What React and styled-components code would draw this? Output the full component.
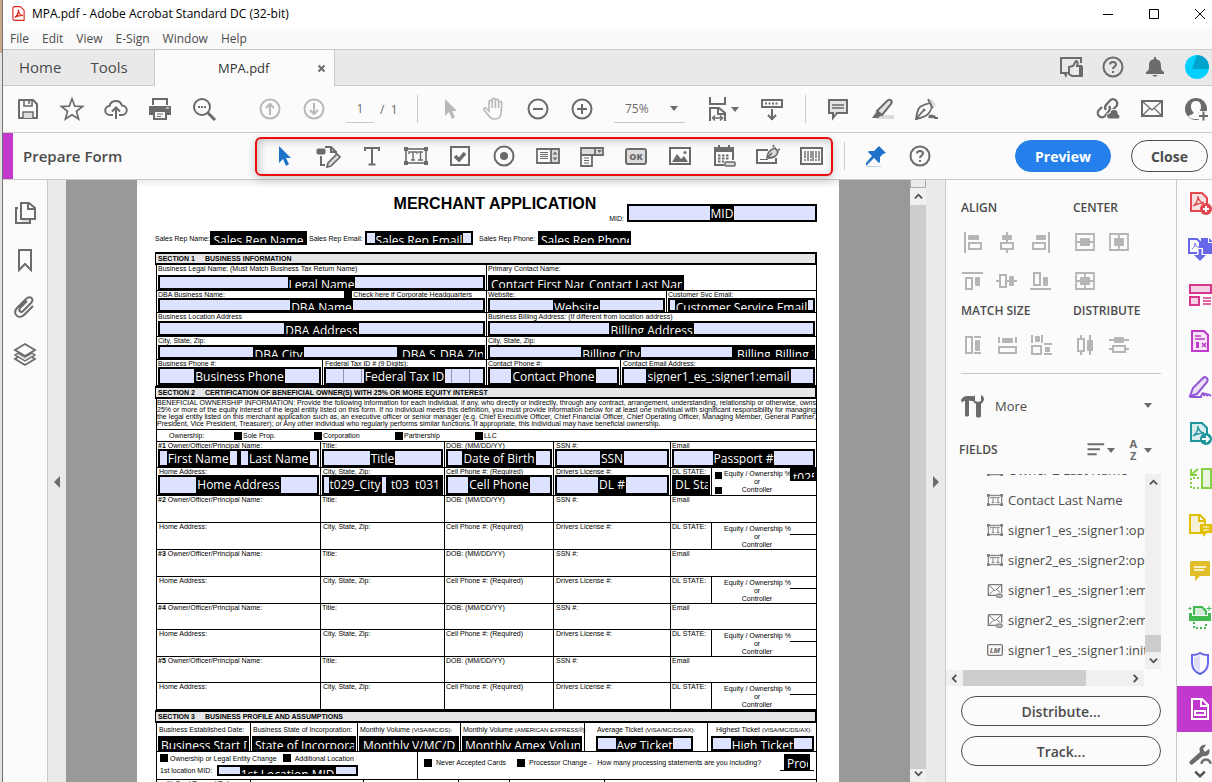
import React from 'react';
import styled, { createGlobalStyle, css } from 'styled-components';

const GlobalStyle = createGlobalStyle`
  * {
    box-sizing: border-box;
  }
  body {
    margin: 0;
    background: #fbfbfb;
    color: #4b4b4b;
    font-family: "Open Sans", "Noto Sans", sans-serif;
    font-size: 12px;
    overflow: hidden;
  }
  button, input, select {
    font-family: inherit;
    color: inherit;
  }
`;

/* ---------- icons ---------- */

const line = { fill: 'none', stroke: 'currentColor', strokeWidth: 2 };
const thin = { fill: 'none', stroke: 'currentColor', strokeWidth: 1 };

const pdfSwirl = <path d="M5 15c3-2 5-6 5-10 0 4 3 7 6 7-4 0-8 1-11 3z" fill="none" stroke="currentColor" strokeWidth="1.3" />;

const textBox = (
  <>
    <rect x="2" y="5" width="20" height="14" {...line} strokeWidth="1.6" />
    <path d="M0 3h4v4H0zM20 3h4v4h-4zM0 17h4v4H0zM20 17h4v4h-4z" fill="currentColor" />
    <path d="M5 10V8h8v2M9 8v8M7 16h4M14 8h5M16.5 8v8M14 16h5" {...line} strokeWidth="1.4" />
  </>
);

const icons = {
  save: (
    <>
      <path d="M3 3h14l4 4v14H3z" {...line} strokeLinejoin="round" />
      <path d="M8 3v6h8V3M13 4v3" {...line} strokeWidth="1.6" />
      <path d="M7 21v-6h10v6" fill="#ddd" stroke="currentColor" strokeWidth="1.5" />
    </>
  ),
  star: <path d="M12 1.800l2.800 7.400 7.800.3-6.100 4.900 2.100 7.600-6.600-4.300L5.400 22l2.100-7.600L1.400 9.500l7.800-.3z" {...line} strokeWidth="1.7" />,
  cloud: (
    <>
      <path d="M9 18H6a4.500 4.500 0 0 1-.5-9 6.500 6.500 0 0 1 12.500-.5A4.500 4.500 0 0 1 18 18h-3" {...line} />
      <path d="M12 22V11M8 14.500l4-4 4 4" {...line} />
    </>
  ),
  print: (
    <>
      <path d="M5 8V2h14v6" {...line} />
      <path d="M1 9h22v9h-4v-3H5v3H1z" fill="currentColor" />
      <path d="M6 14h12v8H6z" fill="#fbfbfb" stroke="currentColor" strokeWidth="2" />
      <path d="M9 17h6M9 19.500h4" {...thin} />
      <path d="M18 11h3" stroke="#fff" />
    </>
  ),
  search: (
    <>
      <circle cx="10" cy="10" r="8" {...line} />
      <path d="M16 16l7 7" {...line} strokeWidth="3" />
      <path d="M6 10h2M9 10h2M12 10h2" {...line} />
    </>
  ),
  up: (
    <>
      <circle cx="12" cy="12" r="9.500" {...line} />
      <path d="M12 18V7M8 11l4-4 4 4" {...line} />
    </>
  ),
  down: (
    <>
      <circle cx="12" cy="12" r="9.500" {...line} />
      <path d="M12 6v11M8 13l4 4 4-4" {...line} />
    </>
  ),
  cursor: <path d="M7 2l12 12h-5l3 6-3 2-3-7-4 4z" fill="currentColor" />,
  hand: (
    <path d="M7 14V5a1.600 1.600 0 0 1 3.200 0V3a1.600 1.600 0 0 1 3.200 0v1a1.600 1.600 0 0 1 3.200 0v2a1.600 1.600 0 0 1 3.200 0l-.6 10c-.4 4-2.500 6-6.500 6-3.500 0-5-1.500-6.500-4L2 13c-1-2 1-3 2.500-1.500zM10.200 5v6M13.400 4v7M16.600 5v6" {...line} strokeWidth="1.6" />
  ),
  minus: (
    <>
      <circle cx="12" cy="12" r="9.500" {...line} />
      <path d="M7 12h10" {...line} />
    </>
  ),
  plus: (
    <>
      <circle cx="12" cy="12" r="9.500" {...line} />
      <path d="M7 12h10M12 7v10" {...line} />
    </>
  ),
  fit: (
    <>
      <path d="M5 0v7h15V0M5 24V11h9l6 5v8M13 11v6h7" {...line} />
      <path d="M8 21h9M10 18.500L7.500 21l2.500 2.500M15 18.500l2.500 2.500-2.500 2.500" {...line} strokeWidth="1.5" />
    </>
  ),
  keys: (
    <>
      <path d="M2 3h20v7H2z" {...line} />
      <path d="M5 6.500h14" {...line} strokeDasharray="2 1.5" />
      <path d="M12 12v11M8 18l4 4 4-4" {...line} />
    </>
  ),
  comment: (
    <>
      <path d="M3 3h18v13H11l-4 5v-5H3z" fill="#e3e3e3" stroke="currentColor" strokeWidth="2" />
      <path d="M6 8h12M6 11h12" {...thin} strokeWidth="1.3" />
    </>
  ),
  marker: (
    <>
      <path d="M9 18h15v4H6z" fill="#dcdcdc" />
      <path d="M7 14L17 4c3-3 6 0 4 3L12 18z" fill="#e3e3e3" stroke="currentColor" strokeWidth="2" />
      <path d="M7 14l5 4-4 3H2z" fill="currentColor" />
    </>
  ),
  pen: (
    <>
      <path d="M14 4l4-2 4 7-3 1z" fill="#dcdcdc" />
      <path d="M14 2l2 4c2 2 2 6-1 10-3 4-8 5-13 6 1-5 1-9 4-12 3-2 6-3 10-4M2 22l7-8M16 7l3 4" {...line} strokeWidth="1.8" />
      <circle cx="10" cy="13" r="1.500" fill="currentColor" />
      <path d="M15 21c1-4 2-3 2 0 1-4 2-3 2 0 1-3 2-2 2 0h3" {...line} strokeWidth="1.8" />
    </>
  ),
  link: (
    <>
      <path d="M10 13a4 4 0 0 1 0-5l4-4.500a4 4 0 0 1 6 6l-3 3M13 9a4 4 0 0 1 0 5l-4 5a4 4 0 0 1-6-6l3-3" {...line} strokeWidth="2.3" />
      <path d="M13 22a3 3 0 0 1 1-6 4 4 0 0 1 8 1c3 1 2 5 0 5z" fill="currentColor" stroke="#fbfbfb" />
    </>
  ),
  mail: (
    <>
      <path d="M2 4h20v15H2z" {...line} />
      <path d="M3 5l9 8 9-8M3 18l7-7M21 18l-7-7" {...thin} strokeWidth="1.2" />
    </>
  ),
  person: (
    <>
      <circle cx="12" cy="12" r="11" fill="currentColor" />
      <path d="M12 4c-4 0-5 3-5 6 0 2 1 4 2.500 5.500 0 2-3 2-5.500 4A10 10 0 0 0 12 22c2 0 3 0 5-1v-4c-2-.5-2.500-1-2.500-1.500C16 14 17 12 17 10c0-3-1-6-5-6z" fill="#fbfbfb" />
      <path d="M15 14h9v9h-9z" fill="#fbfbfb" />
      <path d="M19.500 14.500v9M15 19h9" {...line} />
    </>
  ),
  thumbs: (
    <>
      <path d="M7 18H2V3h20v5" {...line} />
      <path d="M4 17h5l-2 6z" fill="currentColor" />
      <path d="M10 12l4-1 3-5c2 0 2 2 1 5h4v10H13l-3-2z" fill="#e9e9e9" stroke="currentColor" strokeWidth="2" />
      <path d="M20 11h4v11h-4z" fill="currentColor" />
    </>
  ),
  help: (
    <>
      <circle cx="12" cy="12" r="9.500" {...line} />
      <path d="M9 9.500c0-3.500 6-3.500 6 0 0 2-3 2-3 4.500M12 16v2" {...line} />
    </>
  ),
  bell: <path d="M11 2h2v2c4 1 5 3 5 7 0 4 1 5 3 6v2H3v-2c2-1 3-2 3-6 0-4 1-6 5-7zM9 20h6l-3 2z" fill="currentColor" />,
  pin: (
    <>
      <path d="M3 22h14v1H3z" fill="#b8d4f3" />
      <path d="M15 2l7 7-3 1-3 3v5l-1 1-5-5-8 8v-3l6-7-4-4 1-1h5l3-3z" fill="currentColor" />
    </>
  ),
  edit: (
    <>
      <path d="M9 3h6l5 5v2M15 3v5h6M5 12v9h4" {...line} />
      <rect x="1" y="5" width="8" height="5" rx="1" fill="currentColor" stroke="currentColor" />
      <path d="M11 23l1-4 9-9 3 3-9 9z" fill="#ddd" stroke="currentColor" strokeWidth="1.7" />
    </>
  ),
  text: <path d="M5 7V4h14v3M12 4v16M8.500 20.500h7" {...line} />,
  textBox,
  check: (
    <>
      <rect x="3" y="3" width="18" height="18" {...line} />
      <path d="M7 12l4 4 6-7" {...line} strokeWidth="3.5" />
    </>
  ),
  radio: (
    <>
      <circle cx="12" cy="12" r="9.500" {...line} />
      <circle cx="12" cy="12" r="4" fill="currentColor" />
    </>
  ),
  listBox: (
    <>
      <path d="M15 5h8v14h-8z" fill="#ddd" />
      <path d="M1 5h22v14H1zM15 5v14" {...line} strokeWidth="1.8" />
      <path d="M4 8.500h8M4 10.500h8M4 12.500h8M4 14.500h8" {...thin} />
      <path d="M16.500 10.500h5L19 7.500zM16.500 13.500h5L19 16.500z" fill="currentColor" />
    </>
  ),
  dropdown: (
    <>
      <path d="M1 4h22v7H1z" fill="#ddd" stroke="currentColor" strokeWidth="1.8" />
      <path d="M1 11h11v11H1zM15 4v7" {...line} strokeWidth="1.8" />
      <path d="M17 6h5l-2.500 3z" fill="currentColor" />
      <path d="M4 14h5M4 16.500h5M4 19h5" {...thin} />
    </>
  ),
  ok: (
    <>
      <rect x="2" y="5" width="20" height="15" rx="2" fill="#ddd" stroke="currentColor" strokeWidth="2" />
      <text x="12" y="16" fontSize="9" fontWeight="800" textAnchor="middle" fill="currentColor">OK</text>
    </>
  ),
  image: (
    <>
      <rect x="2" y="4" width="20" height="16" {...line} />
      <path d="M4 18l5-8 4 5 3-3 4 6z" fill="currentColor" />
      <circle cx="17" cy="8.500" r="1.500" fill="currentColor" />
    </>
  ),
  date: (
    <>
      <path d="M12 21H3V4h18v12" {...line} />
      <path d="M3 4h18v4H3zM6 1h2v4H6zM16 1h2v4h-2z" fill="currentColor" />
      <path d="M6 11.500h12M6 14.500h12M6 17.500h6" {...line} strokeDasharray="2.5 1.5" />
      <rect x="13" y="18" width="10" height="4" rx="1" fill="#ddd" stroke="currentColor" strokeWidth="1.6" />
    </>
  ),
  sign: (
    <>
      <path d="M12 6H1v13h19v-5" {...line} />
      <path d="M4 15.500h8" {...thin} />
      <path d="M11 14c0-5 2-8 8-10l3 4c-2 5-5 6-11 6zM17 3l1-2M11 14l5-5M22 6l2-1" fill="#ddd" stroke="currentColor" strokeWidth="1.7" />
    </>
  ),
  barcode: (
    <>
      <rect x="1" y="4" width="21" height="16" {...line} />
      <path d="M5 7v7M8 7v10M11 7v7M13 7v10M16 7v7M19 7v10" {...line} strokeWidth="1.4" />
      <path d="M5 15v2M11 15v2M16 15v2" {...line} strokeWidth="1.4" />
    </>
  ),
  pages: (
    <>
      <path d="M8 2h8l6 5v11H8zM15 2v6h6" {...line} />
      <path d="M5 7H3v15h14v-4" {...line} />
      <path d="M9 20h7" stroke="#ddd" strokeWidth="2" />
    </>
  ),
  bookmark: <path d="M6 2h12v20l-6-6-6 6z" {...line} />,
  clip: <path d="M14 6l-7 7c-2 3 1 5 3 3l8-8c4-4-1-8-5-4l-9 9c-5 6 2 12 7 7l9-9" {...line} />,
  layers: (
    <>
      <path d="M12 2l10 6-10 6L2 8z" {...line} strokeWidth="1.8" />
      <path d="M5 11l-3 2 10 6 10-6-3-2-7 4z" fill="#ddd" stroke="currentColor" strokeWidth="1.4" />
      <path d="M5 15l-3 2 10 6 10-6-3-2" {...line} strokeWidth="1.8" />
    </>
  ),
  alignLeft: (
    <>
      <path d="M4 2v21" {...line} />
      <rect x="7" y="5" width="11" height="5" rx="1" fill="currentColor" />
      <rect x="8" y="13" width="12" height="6" {...line} />
    </>
  ),
  alignMid: (
    <>
      <path d="M12 2v10M12 19v4" {...line} />
      <rect x="7" y="5" width="10" height="5" rx="1" fill="currentColor" />
      <rect x="6" y="13" width="12" height="6" {...line} />
    </>
  ),
  alignRight: (
    <>
      <path d="M20 2v21" {...line} />
      <rect x="7" y="5" width="10" height="5" rx="1" fill="currentColor" />
      <rect x="4" y="13" width="12" height="6" {...line} />
    </>
  ),
  alignTop: (
    <>
      <path d="M1 4h21" {...line} />
      <rect x="5" y="9" width="6" height="11" {...line} />
      <rect x="14" y="8" width="5" height="9" rx="1" fill="currentColor" />
    </>
  ),
  alignCenter: (
    <>
      <path d="M1 12h4M11 12h11" {...line} />
      <rect x="5" y="6" width="6" height="12" {...line} />
      <rect x="14" y="7" width="5" height="10" rx="1" fill="currentColor" />
    </>
  ),
  alignBottom: (
    <>
      <path d="M1 20h21" {...line} />
      <rect x="5" y="4" width="6" height="12" {...line} />
      <rect x="14" y="8" width="5" height="9" rx="1" fill="currentColor" />
    </>
  ),
  centerV: (
    <>
      <path d="M3 4h18v16H3zM3 12h18" {...line} strokeWidth="1.8" />
      <rect x="7" y="8" width="10" height="8" rx="1" fill="currentColor" />
    </>
  ),
  centerH: (
    <>
      <path d="M3 4h18v16H3zM12 4v16" {...line} strokeWidth="1.8" />
      <rect x="7" y="8" width="10" height="8" rx="1" fill="currentColor" />
    </>
  ),
  centerBoth: (
    <>
      <path d="M3 4h18v16H3zM12 4v16M3 12h18" {...line} strokeWidth="1.8" />
      <rect x="7" y="8" width="10" height="8" rx="1" fill="currentColor" />
    </>
  ),
  sameHeight: (
    <>
      <rect x="5" y="4" width="6" height="16" {...line} />
      <path d="M13 4h7M13 20h7" {...line} />
      <rect x="14" y="7" width="5" height="11" rx="1" fill="currentColor" />
    </>
  ),
  sameWidth: (
    <>
      <path d="M4 4v6M21 4v6" {...line} />
      <rect x="7" y="5" width="11" height="5" rx="1" fill="currentColor" />
      <rect x="4" y="14" width="17" height="6" {...line} />
    </>
  ),
  sameBoth: (
    <>
      <path d="M3 2v8M13 2v8M15 11h8M15 21h8" {...line} />
      <rect x="6" y="3" width="5" height="6" rx="1" fill="currentColor" />
      <rect x="3" y="13" width="9" height="8" {...line} />
      <rect x="16" y="14" width="5" height="5" fill="currentColor" />
    </>
  ),
  spreadH: (
    <>
      <path d="M8 2v4M8 18v4M17 2v20" {...line} />
      <rect x="5" y="6" width="6" height="12" {...line} />
      <rect x="14" y="7" width="6" height="11" rx="1" fill="currentColor" />
    </>
  ),
  spreadV: (
    <>
      <path d="M2 7h20M2 16h4M18 16h4" {...line} />
      <rect x="7" y="4" width="10" height="6" rx="1" fill="currentColor" />
      <rect x="6" y="13" width="12" height="6" {...line} />
    </>
  ),
  tools: (
    <path d="M0 6c2-4 5-4 8-4h4v5H9L8 6v15c0 2-4 2-4 0V7C3 7 2 7 1 9zM14 1v6l3 1 3-1V1c4 2 4 6 0 9v12c0 2-5 2-5 0V10c-5-3-4-7-1-9z" fill="currentColor" />
  ),
  sort: <path d="M3 5h20M3 11h15M3 17h11" {...line} strokeWidth="2.4" />,
  email: (
    <>
      <path d="M2 4h20v12M2 4v16h12" {...line} />
      <path d="M3 5l9 8 9-8M3 19l7-7M20 16l-6-5" {...line} strokeWidth="1.5" />
      <rect x="14" y="18" width="9" height="5" rx="2" fill="#bbb" stroke="currentColor" strokeWidth="1.5" />
    </>
  ),
  initials: (
    <>
      <rect x="1" y="4" width="22" height="16" rx="2" {...line} />
      <text x="12" y="16" fontSize="11" fontStyle="italic" fontWeight="800" textAnchor="middle" fill="currentColor">LM</text>
    </>
  ),
  acrobat: (
    <>
      <path d="M5 1h10l6 6v16H5L3 21V3z" {...line} strokeWidth="1.8" />
      <path d="M6 18c4-2 6-8 6-12 0 5 3 9 7 9-5 0-9 1-13 3z" {...line} />
    </>
  ),
  createPdf: (
    <>
      <path d="M3 2h11l5 5v13H3z" fill="currentColor" fillOpacity=".15" stroke="currentColor" strokeWidth="2" />
      {pdfSwirl}
      <circle cx="18" cy="18" r="6" fill="currentColor" />
      <path d="M15 18h6M18 15v6" stroke="#fff" strokeWidth="2" />
    </>
  ),
  combine: (
    <>
      <path d="M13 1h7v5h5v11H13z" fill="currentColor" />
      <path d="M21 1l4 4h-4z" fill="currentColor" />
      <path d="M1 2h8l3 3v11H1z" fill="#fbfbfb" stroke="currentColor" strokeWidth="2" />
      <path d="M4 12c3-2 3-4 3-6 0 3 2 4 4 4" {...thin} />
      <path d="M12 11v8" stroke="#fbfbfb" strokeWidth="6" />
      <path d="M12 12v7" stroke="currentColor" strokeWidth="3" />
      <path d="M6 18h12l-6 6z" fill="currentColor" />
    </>
  ),
  organize: (
    <>
      <path d="M2 2h21v8H2zM2 14h9v8H2z" fill="currentColor" fillOpacity=".2" stroke="currentColor" strokeWidth="2" />
      <path d="M15 15h8M15 18h8M15 21h8" {...thin} strokeWidth="1.4" />
    </>
  ),
  formDoc: (
    <>
      <path d="M4 2h12l4 4v16H4z" fill="currentColor" fillOpacity=".1" stroke="currentColor" strokeWidth="2" />
      <path d="M7 7h6M7 10h10" {...line} strokeWidth="1.5" />
      <path d="M8 13h3v6H8z" fill="currentColor" />
      <path d="M14 14l4 4M18 14l-4 4" {...line} strokeWidth="1.5" />
    </>
  ),
  fillSign: (
    <>
      <path d="M2 21l3-8L15 3c2-2 6 0 4 4L9 19z" fill="currentColor" fillOpacity=".15" stroke="currentColor" strokeWidth="2" />
      <path d="M2 22h11c1-5 3-5 3-1 1-3 3-3 3 0 1-2 2-2 4 0" {...line} />
    </>
  ),
  exportPdf: (
    <>
      <path d="M3 2h11l5 5v13H3z" fill="currentColor" fillOpacity=".15" stroke="currentColor" strokeWidth="2" />
      {pdfSwirl}
      <circle cx="18" cy="18" r="6" fill="currentColor" />
      <path d="M14 18h7M18 15l3 3-3 3" fill="none" stroke="#fff" strokeWidth="1.8" />
    </>
  ),
  compress: (
    <>
      <path d="M14 2h9v19h-9z" fill="currentColor" fillOpacity=".15" stroke="currentColor" strokeWidth="2" />
      <path d="M11 11H3v10h9" {...line} strokeDasharray="2 2" />
      <path d="M10 2L4 7M3 2v6h6" {...line} />
    </>
  ),
  pageNote: (
    <>
      <path d="M2 2h10l5 5v13H2zM11 2v6h6" fill="currentColor" fillOpacity=".15" stroke="currentColor" strokeWidth="2" />
      <path d="M12 11h12v9h-5l-4 4v-4h-3z" fill="currentColor" />
      <path d="M15 14h6M15 17h6" stroke="#fff" />
    </>
  ),
  note: (
    <>
      <path d="M3 2h18a1 1 0 0 1 1 1v14H12l-5 5v-5H2V3z" fill="currentColor" />
      <path d="M6 8h12M6 11h10" stroke="#fff" strokeWidth="1.4" />
    </>
  ),
  scan: (
    <>
      <path d="M6 10V2h8l4 4v4" fill="currentColor" fillOpacity=".2" stroke="currentColor" strokeWidth="2" />
      <path d="M1 8h3v3h16V8h3v8H1z" fill="currentColor" />
      <path d="M6 17v6h12v-6" {...line} strokeDasharray="2 2" />
      <path d="M21 1v5M18.500 3.500h5M2 2v3M.500 3.500h3" {...thin} />
    </>
  ),
  shield: (
    <>
      <path d="M12 2c3 2 6 2 8 2v8c0 5-3 9-8 11-5-2-8-6-8-11V4c2 0 5 0 8-2z" {...line} />
      <path d="M12 4v17c-4-2-6-5-6-9V6c2 0 4-1 6-2z" fill="currentColor" fillOpacity=".2" />
    </>
  ),
  prepare: (
    <>
      <path d="M4 2h10l6 6v14H4zM13 2v7h7" {...line} />
      <rect x="7" y="14" width="10" height="4" {...line} />
    </>
  ),
  wrench: (
    <>
      <path d="M2 18L12 9c-2-4 2-8 6-7l-3 4 2 3 4-3c2 5-2 8-6 7L5 21c-2 2-5-1-3-3z" fill="currentColor" />
      <path d="M12 21a6 6 0 0 1 12 0h-3a3 3 0 0 0-6 0z" fill="currentColor" stroke="#fbfbfb" strokeWidth=".5" />
    </>
  ),
};

const Svg = styled.svg`
  display: block;
  flex: none;
  overflow: visible;
  color: ${(p) => p.$color || 'inherit'};
`;

function Icon({ name, size = 24, color }) {
  return (
    <Svg viewBox="0 0 24 24" width={size} height={size} $color={color} aria-hidden="true">
      {icons[name]}
    </Svg>
  );
}

/* ---------- window chrome ---------- */

const Screen = styled.div`
  display: flex;
  height: 100vh;
`;

const Edge = styled.div`
  flex: none;
  width: 3px;
  border-right: 1px solid #737373;
  background: linear-gradient(#c9a98a 0 53px, #e2e2e2 53px);
`;

const Main = styled.div`
  flex: 1;
  min-width: 0;
  display: flex;
  flex-direction: column;
`;

const TitleBar = styled.header`
  flex: none;
  height: 29px;
  display: flex;
  align-items: center;
  gap: 6px;
  padding: 0 6px 2px 8px;
  background: #fff;
  color: #000;
  h1 {
    flex: 1;
    margin: 0;
    font-size: 12px;
    font-weight: 400;
  }
`;

const WindowButtons = styled.div`
  display: flex;
  gap: 34px;
`;

const Plain = styled.button`
  display: flex;
  align-items: center;
  justify-content: center;
  border: 0;
  padding: 0;
  background: none;
`;

const MenuBar = styled.nav`
  flex: none;
  height: 21px;
  display: flex;
  align-items: center;
  gap: 13px;
  padding: 0 0 2px 7px;
  background: #fafafa;
  border-bottom: 1px solid #c9c9c9;
  a {
    color: inherit;
    text-decoration: none;
  }
`;

const TabBar = styled.div`
  flex: none;
  height: 36px;
  display: flex;
  background: #e9e9e9;
  border-bottom: 1px solid #c9c9c9;
`;

const TabLinks = styled.div`
  width: 152px;
  display: flex;
  align-items: center;
  gap: 29px;
  padding: 0 0 2px 16px;
  border-right: 1px solid #c9c9c9;
  button {
    font-size: 15px;
  }
`;

const DocTab = styled.div`
  width: 180px;
  height: 36px;
  display: flex;
  align-items: center;
  justify-content: space-between;
  padding: 0 8px 0 63px;
  background: #fbfbfb;
  border-right: 1px solid #c9c9c9;
  font-size: 13px;
  color: #333;
`;

const TabTools = styled.div`
  flex: 1;
  display: flex;
  align-items: center;
  justify-content: flex-end;
  gap: 18px;
  padding: 0 3px 2px 0;
  color: #6b6b6b;
`;

const ToolBar = styled.div`
  flex: none;
  height: 47px;
  display: flex;
  align-items: center;
  padding-left: 3px;
  border-bottom: 1px solid #c9c9c9;
  color: #6b6b6b;
`;

const Group = styled.div`
  display: flex;
  align-items: center;
  margin-left: ${(p) => p.$left || 0}px;
`;

const Tool = styled(Plain)`
  width: 44px;
  height: 44px;
  ${(p) => p.$off && css`color: #b8b8b8;`}
`;

const ShareTools = styled.div`
  display: flex;
  gap: 12px;
  ${Tool} {
    width: 32px;
  }
`;

const Divider = styled.span`
  width: 1px;
  height: 28px;
  background: #c9c9c9;
`;

const PageInput = styled.input`
  width: 28px;
  height: 28px;
  border: 0;
  border-bottom: 1px solid #c9c9c9;
  background: none;
  text-align: center;
  font-size: 12px;
`;

const PageTotal = styled.span`
  width: 37px;
  padding-left: 6px;
`;

const ZoomBox = styled.div`
  display: flex;
  align-items: center;
  width: 71px;
  height: 28px;
  margin: 0 20px 0 10px;
  padding: 0 7px 0 11px;
  border-bottom: 1px solid #c9c9c9;
  select {
    flex: 1;
    appearance: none;
    border: 0;
    padding: 0;
    background: none;
    font-size: 12px;
  }
`;

const Caret = styled.span`
  border: 4px solid transparent;
  border-top: 5px solid #6b6b6b;
  border-bottom: 0;
`;

const Spacer = styled.div`
  flex: 1;
`;

const FormBar = styled(ToolBar)`
  padding: 0 4px 0 0;
  h2 {
    width: 232px;
    margin: 0;
    padding-left: 10px;
    font-size: 15px;
    font-weight: 600;
    color: #4b4b4b;
  }
`;

const Accent = styled.span`
  width: 10px;
  height: 46px;
  background: #c038cc;
`;

const FormTools = styled.div`
  position: relative;
  z-index: 1;
  display: flex;
  align-items: center;
  gap: 6px;
  height: 39px;
  padding-left: 8px;
  border: 2px solid #f00c0c;
  border-radius: 6px;
  box-shadow: 0 3px 8px rgba(0, 0, 0, 0.2), inset 2px 2px 8px rgba(0, 0, 0, 0.22);
  ${Tool} {
    width: 38px;
    height: 34px;
  }
`;

const Pill = styled.button`
  height: 32px;
  padding: 0 19px;
  border: 1px solid ${(p) => (p.$primary ? '#2680eb' : '#4b4b4b')};
  border-radius: 16px;
  background: ${(p) => (p.$primary ? '#2680eb' : 'transparent')};
  color: ${(p) => (p.$primary ? '#fff' : '#4b4b4b')};
  font-size: 14px;
  font-weight: 700;
`;

const PillGroup = styled.div`
  display: flex;
  gap: 20px;
`;

/* ---------- body ---------- */

const Body = styled.div`
  flex: 1;
  min-height: 0;
  display: flex;
`;

const LeftRail = styled.nav`
  flex: none;
  width: 45px;
  padding-top: 9px;
  border-right: 1px solid #c9c9c9;
  color: #6b6b6b;
  ${Tool} {
    height: 47px;
  }
`;

const Gutter = styled.button`
  flex: none;
  width: ${(p) => p.$width}px;
  display: flex;
  align-items: center;
  justify-content: center;
  border: 0;
  padding: 2px 0 0;
  background: #eaeaea;
  &::before {
    content: "";
    border: 6px solid transparent;
    ${(p) => (p.$side === 'left'
    ? css`border-right-color: #6b6b6b; border-left: 0;`
    : css`border-left-color: #6b6b6b; border-right: 0;`)}
  }
`;

const Canvas = styled.main`
  flex: 1;
  min-width: 0;
  display: flex;
  justify-content: center;
  overflow: hidden;
  background: #999;
`;

const ScrollTrack = styled.div`
  flex: none;
  display: flex;
  flex-direction: ${(p) => (p.$row ? 'row' : 'column')};
  align-items: center;
  justify-content: space-between;
  ${(p) => (p.$row ? css`height: 16px; padding: 0 4px;` : css`width: 16px; padding: 4px 0;`)}
  background: #f0f0f0;
`;

const Thumb = styled.div`
  flex: ${(p) => p.$size};
  align-self: stretch;
  margin: ${(p) => p.$margin || 0};
  background: #cdcdcd;
`;

const SplitBox = styled.div`
  width: 16px;
  height: 8px;
  margin: -4px 0 4px;
  border: 1px solid #aaa;
  border-top: 0;
  background: #eaeaea;
`;

const Chevron = ({ d, size = 9, width = 2 }) => (
  <Svg viewBox="0 0 10 10" width={size} height={size} aria-hidden="true">
    <path d={d} fill="none" stroke="#505050" strokeWidth={width} />
  </Svg>
);

const UP = 'M1 7l4-4 4 4';
const DOWN = 'M1 3l4 4 4-4';
const LEFT = 'M7 1L3 5l4 4';
const RIGHT = 'M3 1l4 4-4 4';

/* ---------- the document ---------- */

const Page = styled.article`
  flex: none;
  width: 702px;
  padding: 0 22px 0 18px;
  background: linear-gradient(#ececec, #fff 8px);
  color: #000;
  font-family: "Liberation Sans", Arial, sans-serif;
  font-size: 7px;
  line-height: 7px;
`;

const PageHead = styled.div`
  display: flex;
  justify-content: flex-end;
  height: 51px;
  padding-top: 14px;
  h2 {
    margin: 0 12px 0 0;
    font-size: 16px;
    line-height: 20px;
  }
  label {
    display: flex;
    align-items: flex-end;
    gap: 3px;
    height: 28px;
  }
`;

const FieldBox = styled.span`
  display: flex;
  justify-content: ${(p) => (p.$dark ? 'space-around' : 'center')};
  flex: ${(p) => (p.$w ? 'none' : 1)};
  width: ${(p) => (p.$w ? `${p.$w}px` : 'auto')};
  height: ${(p) => p.$h || 15}px;
  min-width: 0;
  overflow: hidden;
  border: 2px solid #000;
  background: ${(p) => (p.$dark ? '#000' : '#dde3ff')};
  ${(p) => p.$comb && css`
    background: repeating-linear-gradient(90deg, #dde3ff 0 17px, #8f95b5 17px 18px);
  `}
`;

const Tag = styled.span`
  padding: 0 1px;
  overflow: hidden;
  background: #000;
  color: #fff;
  font-family: "Open Sans", "Noto Sans", sans-serif;
  font-size: 12px;
  line-height: 15px;
  white-space: nowrap;
`;

const Field = ({ name, ...rest }) => (
  <FieldBox {...rest}>
    <Tag>{name}</Tag>
  </FieldBox>
);

const RepRow = styled.div`
  display: grid;
  grid-template-columns: 154px 170px 152px;
  height: 21px;
`;

const RepItem = styled.label`
  display: flex;
  align-items: center;
  justify-content: space-between;
  height: 14px;
  padding-right: ${(p) => p.$pad || 0}px;
`;

const Band = styled.h3`
  display: flex;
  gap: 10px;
  height: 13px;
  margin: 0;
  padding-left: 2px;
  border: 2px solid #000;
  border-left-width: 1px;
  background: #e6e6e6;
  font-size: 7px;
  line-height: 9px;
`;

const Row = styled.div`
  display: grid;
  grid-template-columns: ${(p) => p.$cols};
  height: ${(p) => p.$h}px;
  margin-left: 1px;
  border-right: 1px solid #000;
  border-bottom: 1px solid #000;
`;

const Cell = styled.div`
  display: flex;
  flex-direction: column;
  justify-content: space-between;
  min-width: 0;
  border-left: 1px solid #000;
  white-space: nowrap;
`;

const Caption = styled.span`
  display: flex;
  align-items: center;
  justify-content: space-between;
  padding-left: ${(p) => p.$pad || 1}px;
  small {
    font-size: 6px;
  }
`;

const ProfileRow = styled(Row)`
  ${Caption} {
    padding-top: 3px;
  }
`;

const Fields = styled.div`
  display: flex;
  padding: 0 1px;
`;

const Legal = styled.p`
  margin: 0 0 0 1px;
  height: 31px;
  border: 1px solid #000;
  border-top: 0;
  font-size: 7px;
  line-height: 7px;
  text-align: justify;
`;

const Tick = styled.label`
  display: flex;
  align-items: center;
  gap: ${(p) => p.$gap || 1}px;
  input {
    appearance: none;
    width: ${(p) => p.$size || 8}px;
    height: ${(p) => p.$size || 8}px;
    margin: 0;
    background: #000;
  }
`;

const HeadquartersTick = styled(Tick)`
  height: 7px;
  padding-right: 14px;
`;

const Ownership = styled.div`
  display: grid;
  grid-template-columns: 65px 80px 81px 80px 1fr;
  align-items: center;
  height: 12px;
  margin-left: 1px;
  padding-left: 12px;
  border: 1px solid #000;
  border-top: 0;
`;

const EquityCell = styled.div`
  display: grid;
  grid-template-columns: 12px 66px 1fr;
  border-left: 1px solid #000;
  text-align: center;
  white-space: nowrap;
`;

const EquityText = styled.div`
  padding-top: 2px;
  line-height: 8px;
`;

const Blank = styled.div`
  height: 12px;
  border-bottom: 1px solid #000;
`;

const Ticks = styled.div`
  display: flex;
  flex-direction: column;
  justify-content: space-between;
  padding: 4px 0 1px 3px;
`;

const LastRow = styled(Row)`
  ${Cell} {
    padding: 2px 2px 3px 3px;
  }
`;

const Inline = styled.div`
  display: flex;
  align-items: center;
  gap: ${(p) => p.$gap}px;
`;

const Statements = styled(Cell)`
  && {
    flex-direction: row;
    align-items: center;
    padding: 2px 2px 8px 6px;
  }
`;

const Boxed = styled.div`
  padding: 0 4px;
  border-bottom: 1px solid #000;
`;

const OWNER_TOP = '164px 124px 109px 117px 1fr';
const OWNER_BOTTOM = '164px 124px 109px 117px 41px 1fr';

function Equity({ filled }) {
  return (
    <EquityCell>
      <Ticks>
        {filled && <Tick $size={7}><input type="checkbox" aria-label="Equity / Ownership" /></Tick>}
        {filled && <Tick $size={7}><input type="checkbox" aria-label="Controller" /></Tick>}
      </Ticks>
      <EquityText>
        Equity / Ownership %<br />or<br />Controller
      </EquityText>
      {filled ? <Field name="t025" $h={13} $dark /> : <Blank />}
    </EquityCell>
  );
}

function Owner({ number, top = 27, bottom = 27, filled }) {
  return (
    <>
      <Row $cols={OWNER_TOP} $h={top}>
        <Cell>
          <Caption><span><b>#{number}</b> Owner/Officer/Principal Name:</span></Caption>
          {filled && (
            <Fields>
              <Field name="First Name" $h={18} />
              <Field name="Last Name" $h={18} />
            </Fields>
          )}
        </Cell>
        <Cell>
          <Caption>Title:</Caption>
          {filled && <Fields><Field name="Title" $h={18} /></Fields>}
        </Cell>
        <Cell>
          <Caption>DOB: (MM/DD/YY)</Caption>
          {filled && <Fields><Field name="Date of Birth" $h={18} /></Fields>}
        </Cell>
        <Cell>
          <Caption $pad={2}>SSN #:</Caption>
          {filled && <Fields><Field name="SSN" $h={18} /></Fields>}
        </Cell>
        <Cell>
          <Caption>Email</Caption>
          {filled && <Fields><Field name="Passport #" $h={18} /></Fields>}
        </Cell>
      </Row>
      <Row $cols={OWNER_BOTTOM} $h={bottom}>
        <Cell>
          <Caption $pad={2}>Home Address:</Caption>
          {filled && <Fields><Field name="Home Address" $h={20} /></Fields>}
        </Cell>
        <Cell>
          <Caption $pad={2}>City, State, Zip:</Caption>
          {filled && (
            <Fields>
              <Field name="t029_City" $w={66} $h={20} />
              <Field name="t03" $w={24} $h={20} $dark />
              <Field name="t031" $h={20} $dark />
            </Fields>
          )}
        </Cell>
        <Cell>
          <Caption>Cell Phone #: (Required)</Caption>
          {filled && <Fields><Field name="Cell Phone" $h={20} /></Fields>}
        </Cell>
        <Cell>
          <Caption $pad={2}>Drivers License #:</Caption>
          {filled && <Fields><Field name="DL #" $h={20} /></Fields>}
        </Cell>
        <Cell>
          <Caption>DL STATE:</Caption>
          {filled && <Fields><Field name="DL Stat" $h={20} $dark /></Fields>}
        </Cell>
        <Equity filled={filled} />
      </Row>
    </>
  );
}

function Application() {
  return (
    <Page>
      <PageHead>
        <h2>MERCHANT APPLICATION</h2>
        <label>
          <Caption>MID:</Caption>
          <Field name="MID" $w={190} $h={18} />
        </label>
      </PageHead>
      <RepRow>
        <RepItem $pad={2}>Sales Rep Name:<Field name="Sales Rep Name" $w={97} $h={14} /></RepItem>
        <RepItem $pad={6}>Sales Rep Email:<Field name="Sales Rep Email" $w={108} $h={14} /></RepItem>
        <RepItem>Sales Rep Phone:<Field name="Sales Rep Phone" $w={93} $h={14} /></RepItem>
      </RepRow>

      <Band><span>SECTION 1</span><span>BUSINESS INFORMATION</span></Band>
      <Row $cols="330px 1fr" $h={26}>
        <Cell>
          <Caption>Business Legal Name: (Must Match Business Tax Return Name)</Caption>
          <Fields><Field name="Legal Name" /></Fields>
        </Cell>
        <Cell>
          <Caption>Primary Contact Name:</Caption>
          <Fields>
            <Field name="Contact First Nam" $w={98} $dark />
            <Field name="Contact Last Nam" $w={98} $dark />
          </Fields>
        </Cell>
      </Row>
      <Row $cols="330px 180px 1fr" $h={22}>
        <Cell>
          <Caption>
            DBA Business Name:
            <HeadquartersTick><input type="checkbox" />Check here if Corporate Headquarters</HeadquartersTick>
          </Caption>
          <Fields><Field name="DBA Name" $h={14} /></Fields>
        </Cell>
        <Cell>
          <Caption>Website:</Caption>
          <Fields><Field name="Website" $h={14} /></Fields>
        </Cell>
        <Cell>
          <Caption>Customer Svc Email:</Caption>
          <Fields><Field name="Customer Service Email" $h={14} /></Fields>
        </Cell>
      </Row>
      <Row $cols="330px 1fr" $h={24}>
        <Cell>
          <Caption>Business Location Address</Caption>
          <Fields><Field name="DBA Address" /></Fields>
        </Cell>
        <Cell>
          <Caption>Business Billing Address: (If different from location address)</Caption>
          <Fields><Field name="Billing Address" /></Fields>
        </Cell>
      </Row>
      <Row $cols="330px 1fr" $h={23}>
        <Cell>
          <Caption>City, State, Zip:</Caption>
          <Fields>
            <Field name="DBA City" $w={241} $h={14} />
            <Field name="DBA S" $w={38} $h={14} $dark />
            <Field name="DBA Zip" $h={14} $dark />
          </Fields>
        </Cell>
        <Cell>
          <Caption>City, State, Zip:</Caption>
          <Fields>
            <Field name="Billing City" $w={246} $h={14} />
            <Field name="Billing" $w={38} $h={14} $dark />
            <Field name="Billing Z" $h={14} $dark />
          </Fields>
        </Cell>
      </Row>
      <Row $cols="166px 164px 134px 1fr" $h={26}>
        <Cell>
          <Caption>Business Phone #:</Caption>
          <Fields><Field name="Business Phone" $h={18} /></Fields>
        </Cell>
        <Cell>
          <Caption $pad={2}>Federal Tax ID # (9 Digits):</Caption>
          <Fields><Field name="Federal Tax ID" $h={18} $comb /></Fields>
        </Cell>
        <Cell>
          <Caption>Contact Phone #:</Caption>
          <Fields><Field name="Contact Phone" $h={18} /></Fields>
        </Cell>
        <Cell>
          <Caption $pad={2}>Contact Email Address:</Caption>
          <Fields><Field name="signer1_es_:signer1:email" $h={18} /></Fields>
        </Cell>
      </Row>

      <Band>
        <span>SECTION 2</span>
        <span>CERTIFICATION OF BENEFICIAL OWNER(S) WITH 25% OR MORE EQUITY INTEREST</span>
      </Band>
      <Legal>
        BENEFICIAL OWNERSHIP INFORMATION: Provide the following information for each individual, if any, who directly or
        indirectly, through any contract, arrangement, understanding, relationship or otherwise, owns 25% or more of the
        equity interest of the legal entity listed on this form. If no individual meets this definition, you must provide
        information below for at least one individual with significant responsibility for managing the legal entity listed
        on this merchant application such as, an executive officer or senior manager (e.g. Chief Executive Officer, Chief
        Financial Officer, Chief Operating Officer, Managing Member, General Partner, President, Vice President,
        Treasurer); or Any other individual who regularly performs similar functions. If appropriate, this individual may
        have beneficial ownership.
      </Legal>
      <Ownership>
        <span>Ownership:</span>
        {['Sole Prop.', 'Corporation', 'Partnership', 'LLC'].map((type) => (
          <Tick key={type}><input type="checkbox" />{type}</Tick>
        ))}
      </Ownership>
      <Owner number={1} top={26} bottom={28} filled />
      <Owner number={2} />
      <Owner number={3} />
      <Owner number={4} top={26} />
      <Owner number={5} top={26} />

      <Band><span>SECTION 3</span><span>BUSINESS PROFILE AND ASSUMPTIONS</span></Band>
      <ProfileRow $cols="94px 107px 103px 124px 123px 1fr" $h={29}>
        <Cell>
          <Caption $pad={2}>Business Established Date:</Caption>
          <Fields><Field name="Business Start D" $dark /></Fields>
        </Cell>
        <Cell>
          <Caption $pad={2}>Business State of Incorporation:</Caption>
          <Fields><Field name="State of Incorporat" $dark /></Fields>
        </Cell>
        <Cell>
          <Caption $pad={2}><span>Monthly Volume <small>(VISA/MC/DS):</small></span></Caption>
          <Fields><Field name="Monthly V/MC/D" $dark /></Fields>
        </Cell>
        <Cell>
          <Caption $pad={2}><span>Monthly Volume <small>(AMERICAN EXPRESS®):</small></span></Caption>
          <Fields><Field name="Monthly Amex Volun" $w={120} $dark /></Fields>
        </Cell>
        <Cell>
          <Caption $pad={12}><span>Average Ticket <small>(VISA/MC/DS/AX):</small></span></Caption>
          <Inline $gap={11}><span /><Field name="Avg Ticket" $w={97} /></Inline>
        </Cell>
        <Cell>
          <Caption $pad={8}><span>Highest Ticket <small>(VISA/MC/DS/AX):</small></span></Caption>
          <Inline $gap={3}><span /><Field name="High Ticket" $w={103} /></Inline>
        </Cell>
      </ProfileRow>
      <LastRow $cols="261px 1fr" $h={28}>
        <Cell>
          <Inline $gap={6}>
            <Tick $gap={2}><input type="checkbox" />Ownership or Legal Entity Change</Tick>
            <Tick $gap={4}><input type="checkbox" />Additional Location</Tick>
          </Inline>
          <Inline $gap={5}>1st location MID:<Field name="1st Location MID" $w={141} $h={11} /></Inline>
        </Cell>
        <Statements>
          <Inline $gap={11}>
            <Tick $gap={4}><input type="checkbox" />Never Accepted Cards</Tick>
            <Tick $gap={4}><input type="checkbox" />Processor Change -</Tick>
          </Inline>
          <Inline $gap={6}><span />How many processing statements are you including?</Inline>
          <Spacer />
          <Boxed><Field name="Proc" $w={26} $h={16} $dark /></Boxed>
        </Statements>
      </LastRow>
      <Row $cols="94px 113px 95px 51px 95px 1fr" $h={28}>
        <Cell><Caption $pad={10}>% Card Present/Sales:</Caption></Cell>
        <Cell />
        <Cell />
        <Cell />
        <Cell />
        <Cell />
      </Row>
    </Page>
  );
}

/* ---------- right panel ---------- */

const Panel = styled.aside`
  flex: none;
  width: 232px;
  display: flex;
  flex-direction: column;
  border: solid #c9c9c9;
  border-width: 0 1px;
`;

const Arrange = styled.div`
  display: grid;
  grid-template-columns: 112px 1fr;
  row-gap: 10px;
  margin: 20px 15px 0;
  padding-bottom: 16px;
  border-bottom: 1px solid #c9c9c9;
`;

const Heading = styled.h3`
  margin: 0;
  font-size: 12px;
  line-height: 16px;
  font-weight: 600;
  color: #4b4b4b;
`;

const ArrangeIcons = styled.div`
  display: grid;
  grid-template-columns: repeat(${(p) => p.$n}, 24px);
  gap: 15px 10px;
  padding-top: 14px;
`;

const arrange = [
  ['ALIGN', 3, ['alignLeft', 'alignMid', 'alignRight', 'alignTop', 'alignCenter', 'alignBottom']],
  ['CENTER', 2, ['centerV', 'centerH', 'centerBoth']],
  ['MATCH SIZE', 3, ['sameHeight', 'sameWidth', 'sameBoth']],
  ['DISTRIBUTE', 2, ['spreadH', 'spreadV']],
];

const More = styled(Plain)`
  justify-content: flex-start;
  gap: 10px;
  height: 63px;
  margin: 0 15px;
  padding-right: 9px;
  font-size: 13px;
  color: #4b4b4b;
  span:first-of-type {
    flex: 1;
    text-align: left;
  }
  svg {
    color: #6b6b6b;
  }
`;

const FieldsHead = styled.div`
  display: flex;
  align-items: center;
  gap: 14px;
  height: 26px;
  margin: 0 24px 0 13px;
  color: #6b6b6b;
  ${Heading} {
    flex: 1;
  }
  ${Plain} {
    gap: 2px;
  }
`;

const AZ = styled.span`
  font-size: 11px;
  line-height: 12px;
  font-weight: 700;
`;

const ListWrap = styled.div`
  flex: none;
  display: flex;
  height: 195px;
  margin: 11px 15px 0 0;
`;

const List = styled.ul`
  flex: 1;
  min-width: 0;
  display: flex;
  flex-direction: column;
  justify-content: flex-end;
  margin: 0;
  padding: 0 0 4px 41px;
  overflow: hidden;
  list-style: none;
`;

const Item = styled.li`
  flex: none;
  display: flex;
  align-items: center;
  gap: 5px;
  height: 30px;
  font-size: 13px;
  white-space: nowrap;
  svg {
    color: #7a7a7a;
  }
`;

const items = [
  ['textBox', 'Owner 2 Last Name'],
  ['textBox', 'Contact Last Name'],
  ['textBox', 'signer1_es_:signer1:optinitials'],
  ['textBox', 'signer2_es_:signer2:optinitials'],
  ['email', 'signer1_es_:signer1:email'],
  ['email', 'signer2_es_:signer2:email'],
  ['initials', 'signer1_es_:signer1:initials'],
];

const HScroll = styled(ScrollTrack)`
  margin: 1px 32px 0 0;
`;

const Actions = styled.div`
  display: flex;
  flex-direction: column;
  gap: 10px;
  padding: 10px 15px;
`;

const ActionButton = styled.button`
  height: 30px;
  border: 1px solid #4b4b4b;
  border-radius: 15px;
  background: none;
  font-size: 14px;
  font-weight: 600;
`;

const RightRail = styled.nav`
  flex: none;
  width: 35px;
  overflow: hidden;
`;

const RailButton = styled(Plain)`
  justify-content: flex-start;
  width: 46px;
  height: 46px;
  padding-left: 11px;
  color: ${(p) => p.$color};
  background: ${(p) => (p.$active ? '#c038cc' : 'none')};
`;

const rail = [
  ['createPdf', '#e34850'],
  ['combine', '#6767ec'],
  ['organize', '#d83790'],
  ['formDoc', '#c038cc'],
  ['fillSign', '#9256d9'],
  ['exportPdf', '#1b959a'],
  ['compress', '#85d044'],
  ['pageNote', '#dfbf00'],
  ['note', '#e0bf2a'],
  ['scan', '#3fb950'],
  ['shield', '#6767ec'],
  ['prepare', '#ffffff'],
  ['wrench', '#6b6b6b'],
];

const RailMore = styled.div`
  margin: -10px 0 0 17px;
`;

const Avatar = styled.span`
  width: 24px;
  height: 24px;
  border-radius: 50%;
  background: conic-gradient(from 18deg at 30% 58%, #00a3cc 0 72deg, #00d0ff 72deg);
`;

const tools = (names, off) => names.map((name) => (
  <Tool key={name} aria-label={name} $off={off}><Icon name={name} /></Tool>
));

export default function App() {
  return (
    <Screen>
      <GlobalStyle />
      <Edge />
      <Main>
        <TitleBar>
          <Icon name="acrobat" size={15} color="#e0241b" />
          <h1>MPA.pdf - Adobe Acrobat Standard DC (32-bit)</h1>
          <WindowButtons>
            <Plain aria-label="Minimize"><Svg width="12" height="12"><path d="M1 6.500h10" stroke="#000" /></Svg></Plain>
            <Plain aria-label="Maximize"><Svg width="12" height="12"><path d="M1.500 1.500h9v9h-9z" fill="none" stroke="#000" /></Svg></Plain>
            <Plain aria-label="Close window"><Svg width="12" height="12"><path d="M1 1l10 10M11 1L1 11" stroke="#000" /></Svg></Plain>
          </WindowButtons>
        </TitleBar>
        <MenuBar>
          {['File', 'Edit', 'View', 'E-Sign', 'Window', 'Help'].map((m) => <a key={m} href="#menu">{m}</a>)}
        </MenuBar>
        <TabBar>
          <TabLinks>
            <Plain>Home</Plain>
            <Plain>Tools</Plain>
          </TabLinks>
          <DocTab>
            MPA.pdf
            <Plain aria-label="Close tab"><Svg width="9" height="9"><path d="M1.500 1.500l6 6M7.500 1.500l-6 6" stroke="#6b6b6b" strokeWidth="2" /></Svg></Plain>
          </DocTab>
          <TabTools>
            <Icon name="thumbs" />
            <Icon name="help" />
            <Icon name="bell" />
            <Avatar />
          </TabTools>
        </TabBar>
        <ToolBar>
          <Group>{tools(['save', 'star', 'cloud', 'print', 'search'])}</Group>
          <Group $left={22}>{tools(['up', 'down'], true)}</Group>
          <Group $left={10}>
            <PageInput aria-label="Page" defaultValue="1" />
            <PageTotal>/&nbsp; 1</PageTotal>
            <Group $left={6}><Divider /></Group>
          </Group>
          <Group $left={10}>{tools(['cursor', 'hand'], true)}{tools(['minus', 'plus'])}</Group>
          <ZoomBox>
            <select aria-label="Zoom" defaultValue="75%"><option>75%</option></select>
            <Caret />
          </ZoomBox>
          <Plain aria-label="Fit width"><Icon name="fit" /><Group $left={2}><Caret /></Group></Plain>
          <Group $left={11}>{tools(['keys'])}</Group>
          <Group $left={11}><Divider /></Group>
          <Group $left={10}>{tools(['comment', 'marker', 'pen'])}</Group>
          <Spacer />
          <ShareTools>{tools(['link', 'mail', 'person'])}</ShareTools>
        </ToolBar>
        <FormBar>
          <Accent />
          <h2>Prepare Form</h2>
          <Group $left={10}>
            <FormTools>
              <Tool aria-label="Select"><Icon name="cursor" color="#1f72c9" /></Tool>
              {tools(['edit', 'text', 'textBox', 'check', 'radio', 'listBox', 'dropdown', 'ok', 'image', 'date', 'sign', 'barcode'])}
            </FormTools>
          </Group>
          <Group $left={11}><Divider /></Group>
          <Group $left={9}>
            <Tool aria-label="Pin"><Icon name="pin" color="#1f72c9" /></Tool>
            {tools(['help'])}
          </Group>
          <Spacer />
          <PillGroup>
            <Pill $primary>Preview</Pill>
            <Pill>Close</Pill>
          </PillGroup>
        </FormBar>
        <Body>
          <LeftRail>{tools(['pages', 'bookmark', 'clip', 'layers'])}</LeftRail>
          <Gutter $width={18} $side="left" aria-label="Show navigation pane" />
          <Canvas>
            <Application />
          </Canvas>
          <ScrollTrack>
            <SplitBox />
            <Chevron d={UP} />
            <Thumb $size={378} $margin="4px 0 0" />
            <Thumb as={Spacer} $size={184} />
            <Chevron d={DOWN} />
          </ScrollTrack>
          <Gutter $width={19} $side="right" aria-label="Hide tools pane" />
          <Panel>
            <Arrange>
              {arrange.map(([title, n, names]) => (
                <div key={title}>
                  <Heading>{title}</Heading>
                  <ArrangeIcons $n={n}>
                    {names.map((name) => <Plain key={name} aria-label={name}><Icon name={name} color="#b5b5b5" /></Plain>)}
                  </ArrangeIcons>
                </div>
              ))}
            </Arrange>
            <More><Icon name="tools" /><span>More</span><Caret /></More>
            <FieldsHead>
              <Heading>FIELDS</Heading>
              <Plain aria-label="Order"><Icon name="sort" size={20} /><Caret /></Plain>
              <Plain><AZ>A<br />Z</AZ><Group $left={5}><Caret /></Group></Plain>
            </FieldsHead>
            <ListWrap>
              <List>
                {items.map(([icon, name]) => (
                  <Item key={name}><Icon name={icon} size={16} />{name}</Item>
                ))}
              </List>
              <ScrollTrack>
                <Chevron d={UP} />
                <Spacer />
                <Thumb $size="0 0 17px" $margin="0 0 4px" />
                <Chevron d={DOWN} />
              </ScrollTrack>
            </ListWrap>
            <HScroll $row>
              <Chevron d={LEFT} />
              <Thumb $size="0 0 123px" $margin="0 auto 0 4px" />
              <Chevron d={RIGHT} />
            </HScroll>
            <Actions>
              <ActionButton>Distribute...</ActionButton>
              <ActionButton>Track...</ActionButton>
            </Actions>
          </Panel>
          <RightRail>
            {rail.map(([name, color]) => (
              <RailButton key={name} aria-label={name} $color={color} $active={name === 'prepare'}>
                <Icon name={name} />
              </RailButton>
            ))}
            <RailMore><Chevron d={DOWN} size={12} /></RailMore>
          </RightRail>
        </Body>
      </Main>
    </Screen>
  );
}
